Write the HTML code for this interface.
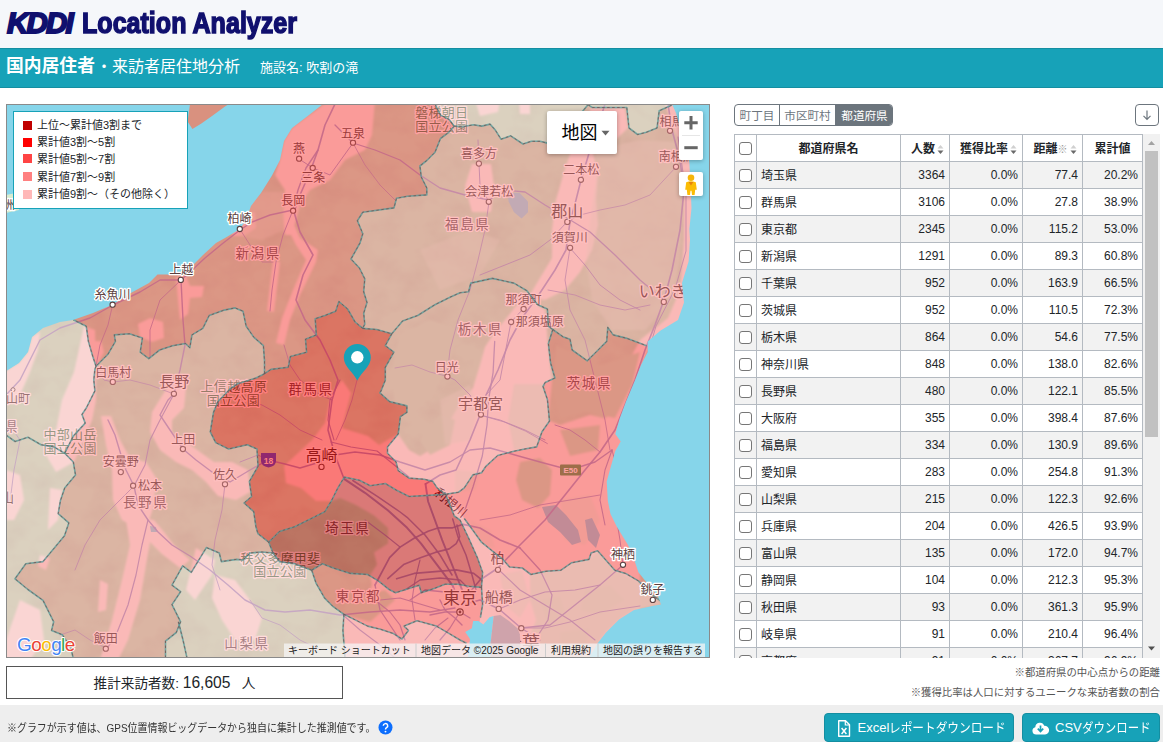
<!DOCTYPE html>
<html lang="ja">
<head>
<meta charset="utf-8">
<title>KDDI Location Analyzer</title>
<style>
*{box-sizing:border-box;margin:0;padding:0}
html,body{width:1163px;height:742px;overflow:hidden;background:#fff}
body{font-family:"Liberation Sans","Noto Sans CJK JP",sans-serif;color:#212529;position:relative;font-size:12px}
.abs{position:absolute}
#hdr{left:0;top:0;width:1163px;height:48px;background:#f5f7fa}
#logo{left:7px;top:0;height:47px;white-space:nowrap;color:#10106e}
#logo .k{position:absolute;left:0;top:6px;font-style:italic;font-weight:bold;font-size:29.5px;line-height:34px;letter-spacing:-1.8px;-webkit-text-stroke:1.9px #10106e;display:block;transform-origin:left center}
#logo .l{position:absolute;left:75px;top:6px;font-weight:bold;font-size:29.5px;line-height:34px;-webkit-text-stroke:1.5px #10106e;display:block;transform:scaleX(0.85);transform-origin:left center}
#bar{left:0;top:48px;width:1163px;height:40px;background:#17a2b8;border-top:1px solid #148ea1;border-bottom:1px solid #148ea1;color:#fff}
#bar .t1{left:6px;top:2px;font-size:17.8px;font-weight:bold;white-space:nowrap}
#bar .t2{left:96px;top:4px;font-size:16px;white-space:nowrap}
#bar .t3{left:260px;top:8px;font-size:13px;white-space:nowrap}
#map{left:6px;top:104px;width:704px;height:554px;border:1px solid #8a8a8a;overflow:hidden;background:#86d5ea}
#legend{left:13px;top:111px;width:175px;height:98px;background:#fff;border:1px solid #17a2b8;font-size:11px}
#legend div{position:absolute;left:23px;white-space:nowrap;line-height:14px}
#legend i{position:absolute;left:9px;width:9px;height:9px}
#total{left:6px;top:666px;width:337px;height:33px;border:1px solid #555;background:#fff;text-align:center;font-size:13.600px;line-height:31px;white-space:nowrap}
#foot{left:0;top:705px;width:1163px;height:37px;background:#eeeeee}
#foot .n{left:7px;top:14px;font-size:11px;color:#333;white-space:nowrap;transform-origin:left center}
.btn{position:absolute;top:713px;height:29px;background:#17a2b8;border:1px solid #148ea1;border-radius:4px;color:#fff;font-size:13px;line-height:28px;white-space:nowrap}
.bt{position:absolute;top:0;white-space:nowrap}
.kn{display:inline-block;transform-origin:left center;white-space:nowrap}
.note{position:absolute;right:3px;font-size:10.4px;color:#555;white-space:nowrap}
#tabs{left:734px;top:104px;width:159px;height:22px;border:1px solid #6c757d;border-radius:4px;overflow:hidden;font-size:12px;color:#6c757d}
#tabs span{position:absolute;top:0;height:20px;line-height:22px;text-align:center;font-size:11.6px}
#dl{left:1135px;top:104px;width:24px;height:22px;border:1px solid #6c757d;border-radius:4px;color:#6c757d;text-align:center;line-height:18px;font-size:13px}
#tblwrap{left:734px;top:134px;width:426px;height:524px;overflow:hidden}
table{border-collapse:collapse;table-layout:fixed;width:409px;font-size:12px}
td,th{border:1px solid #b4bac1;height:27px;padding:0 4px 2px 4px;white-space:nowrap;overflow:hidden}
th{font-weight:bold;text-align:center}
td.r{text-align:right;padding-bottom:0}
tr.o td{background:#f2f2f2}
.cb{display:block;width:13px;height:13px;border:1px solid #767676;border-radius:3px;background:#fff;margin:0 auto}
#sb{left:1143px;top:134px;width:17px;height:524px;background:#f1f1f1}
#sb b{position:absolute;left:2px;top:17px;width:13px;height:286px;background:#c1c1c1}
.so{display:inline-block;width:7px;height:11px;margin-left:2px;vertical-align:-2px}
</style>
</head>
<body>
<div id="hdr" class="abs"></div>
<div id="logo" class="abs"><span class="k">KDDI</span> <span class="l">Location Analyzer</span></div>
<div id="bar" class="abs">
 <div class="abs t1">国内居住者</div>
 <div class="abs t2">・<span style="position:absolute;left:16px;top:0">来訪者居住地分析</span></div>
 <div class="abs t3">施設名: 吹割の滝</div>
</div>

<div id="map" class="abs">
<svg width="702" height="552" viewBox="7 105 702 552" style="position:absolute;left:0;top:0;display:block" font-family="'Liberation Sans','Noto Sans CJK JP',sans-serif">
<defs><filter id="b1" x="-5%" y="-5%" width="110%" height="110%"><feGaussianBlur stdDeviation="1.2"/></filter><filter id="hs" x="0" y="0" width="100%" height="100%"><feTurbulence type="fractalNoise" baseFrequency="0.035 0.045" numOctaves="3" seed="7"/><feColorMatrix type="matrix" values="0 0 0 0 0.35  0 0 0 0 0.5  0 0 0 0 0.38  1.6 0 0 0 -0.62"/></filter></defs>
<rect x="0" y="100" width="720" height="560" fill="#b8ecc8"/>
<rect x="0" y="100" width="720" height="560" filter="url(#hs)" opacity="0.42"/>
<g filter="url(#b1)">
<polygon points="312.0,440.0 325.0,423.0 331.0,395.0 342.0,380.0 351.0,393.0 342.0,428.0 368.0,436.0 379.0,445.0 398.0,434.0 409.0,450.0 420.0,456.0 442.0,443.0 451.0,419.0 462.0,400.0 473.0,388.0 480.0,365.0 485.0,347.0 495.0,332.0 505.0,320.0 516.0,306.0 526.0,298.0 545.0,310.0 548.0,345.0 552.0,380.0 548.0,420.0 560.0,425.0 590.0,415.0 612.0,420.0 640.0,400.0 640.0,660.0 345.0,660.0 343.0,615.0 365.0,600.0 372.0,585.0 370.0,575.0 377.0,564.6 374.0,552.4 388.0,543.6 388.0,528.0 374.0,515.6 356.0,505.0 340.0,498.0 331.0,501.0 316.0,501.0 301.0,488.0 286.0,483.0 284.0,466.0" fill="#f6f4f0"/>
<polygon points="330.0,100.0 292.0,128.0 284.0,141.0 280.0,160.0 275.0,175.0 285.0,190.0 283.0,215.0 285.0,235.0 292.0,235.0 300.0,205.0 310.0,190.0 330.0,180.0 345.0,160.0 365.0,150.0 372.0,135.0 375.0,100.0" fill="#f6f4f0"/>
<polygon points="240.0,215.0 255.0,212.0 256.0,228.0 244.0,236.0 232.0,236.0" fill="#f6f4f0"/>
<polygon points="290.0,215.0 300.0,238.0 318.0,250.0 316.0,262.0 300.0,295.0 290.0,320.0 284.0,345.0 276.0,343.0 282.0,318.0 293.0,290.0 306.0,260.0 296.0,245.0 286.0,225.0" fill="#f6f4f0"/>
<polygon points="273.0,260.0 280.0,262.0 274.0,312.0 267.0,311.0" fill="#f6f4f0"/>
<polygon points="176.0,277.0 186.0,276.0 190.0,286.0 204.0,286.0 202.0,297.0 190.0,298.0 188.0,314.0 180.0,320.0 178.0,300.0" fill="#f6f4f0"/>
<polygon points="138.0,324.0 150.0,318.0 163.0,322.0 164.0,338.0 152.0,342.0 140.0,337.0" fill="#f6f4f0"/>
<polygon points="89.0,341.0 101.0,341.0 104.0,352.0 97.0,366.0 91.0,358.0" fill="#f6f4f0"/>
<polygon points="6.0,371.0 19.0,363.0 28.0,352.0 32.0,337.0 40.0,332.0 38.0,350.0 30.0,372.0 20.0,395.0 6.0,402.0" fill="#f6f4f0"/>
<polygon points="84.0,326.0 95.0,330.0 96.0,366.0 96.0,400.0 92.0,420.0 84.0,440.0 74.0,462.0 56.0,472.0 46.0,455.0 56.0,430.0 62.0,400.0 74.0,372.0" fill="#f6f4f0"/>
<polygon points="50.0,488.0 62.0,490.0 58.0,520.0 48.0,530.0" fill="#f6f4f0"/>
<polygon points="101.0,416.0 111.0,416.0 120.0,440.0 130.0,458.0 146.0,462.0 156.0,478.0 154.0,505.0 148.0,524.0 136.0,528.0 122.0,520.0 113.0,500.0 112.0,470.0 106.0,445.0" fill="#f6f4f0"/>
<polygon points="170.0,383.0 186.0,388.0 184.0,408.0 172.0,420.0 172.0,432.0 186.0,442.0 200.0,452.0 214.0,462.0 232.0,462.0 248.0,470.0 250.0,492.0 236.0,500.0 218.0,496.0 206.0,482.0 192.0,470.0 176.0,462.0 160.0,450.0 150.0,432.0 152.0,412.0 162.0,396.0" fill="#f6f4f0"/>
<polygon points="134.0,512.0 144.0,518.0 154.0,520.0 164.0,532.0 174.0,545.0 190.0,560.0 180.0,568.0 162.0,554.0 150.0,542.0 146.0,565.0 140.0,600.0 128.0,640.0 118.0,660.0 100.0,660.0 112.0,620.0 122.0,580.0 130.0,545.0 126.0,520.0" fill="#f6f4f0"/>
<polygon points="100.0,580.0 108.0,584.0 106.0,610.0 98.0,612.0" fill="#f6f4f0"/>
<polygon points="40.0,555.0 50.0,558.0 46.0,570.0 38.0,566.0" fill="#f6f4f0"/>
<polygon points="6.0,470.0 20.0,475.0 24.0,500.0 14.0,520.0 6.0,520.0" fill="#f6f4f0"/>
<polygon points="20.0,600.0 40.0,610.0 44.0,640.0 30.0,660.0 6.0,660.0 6.0,640.0" fill="#f6f4f0"/>
<polygon points="215.0,575.0 235.0,580.0 250.0,600.0 262.0,618.0 255.0,640.0 235.0,640.0 222.0,620.0 212.0,598.0" fill="#f6f4f0"/>
<polygon points="196.0,548.0 215.0,560.0 212.0,575.0 195.0,600.0 186.0,590.0" fill="#f6f4f0"/>
<polygon points="472.0,164.0 491.0,164.0 494.0,186.0 491.0,212.0 472.0,212.0 465.0,186.0" fill="#f6f4f0"/>
<polygon points="572.0,148.0 592.0,148.0 598.0,175.0 596.0,200.0 598.0,225.0 592.0,250.0 580.0,272.0 565.0,290.0 545.0,300.0 528.0,298.0 540.0,278.0 552.0,258.0 552.0,230.0 556.0,200.0 564.0,172.0" fill="#f6f4f0"/>
<polygon points="590.0,108.0 625.0,108.0 628.0,128.0 610.0,145.0 592.0,140.0" fill="#f6f4f0"/>
<polygon points="519.0,100.0 530.0,100.0 530.0,114.0 520.0,114.0" fill="#f6f4f0"/>
<polygon points="665.0,104.0 680.0,104.0 695.0,160.0 695.0,300.0 680.0,330.0 650.0,345.0 640.0,340.0 668.0,318.0 680.0,290.0 684.0,240.0 684.0,180.0 676.0,135.0" fill="#f6f4f0"/>
<polygon points="640.0,340.0 650.0,345.0 636.0,380.0 620.0,420.0 605.0,420.0 622.0,385.0 632.0,355.0" fill="#f6f4f0"/>
<polygon points="475.0,100.0 500.0,100.0 498.0,112.0 480.0,116.0" fill="#f6f4f0"/>
<polygon points="520.0,462.0 540.0,458.0 552.0,470.0 550.0,495.0 538.0,508.0 522.0,500.0 516.0,480.0" fill="#b8ecc8"/>
<polygon points="556.0,345.0 600.0,365.0 640.0,352.0 632.0,385.0 615.0,418.0 585.0,412.0 560.0,420.0 552.0,390.0" fill="#b8ecc8"/>
<polygon points="420.0,440.0 440.0,415.0 455.0,420.0 450.0,445.0 430.0,455.0" fill="#b8ecc8"/>
<polygon points="395.0,405.0 430.0,400.0 450.0,360.0 458.0,330.0 430.0,320.0 400.0,335.0 392.0,370.0" fill="#b8ecc8"/>
<polygon points="585.0,590.0 610.0,585.0 625.0,600.0 600.0,615.0 580.0,610.0" fill="#b8ecc8"/>
<polygon points="540.0,600.0 560.0,596.0 566.0,615.0 548.0,625.0" fill="#b8ecc8"/>
<polygon points="560.0,632.0 590.0,628.0 585.0,650.0 560.0,655.0" fill="#b8ecc8"/>
<polygon points="345.0,600.0 385.0,590.0 395.0,600.0 370.0,622.0 345.0,615.0" fill="#b8ecc8"/>
<polygon points="560.0,430.0 600.0,425.0 598.0,450.0 570.0,456.0" fill="#b8ecc8"/>
<polygon points="530.0,574.0 546.0,571.0 561.0,570.0 572.0,563.0 589.0,559.0 598.0,551.0 615.0,570.0 638.0,581.0 653.0,596.0 661.0,604.0 634.0,610.0 619.0,620.0 606.0,632.0 598.0,643.0 589.0,660.0 535.0,660.0 528.0,640.0 536.0,620.0 530.0,600.0" fill="#d3f8e2" fill-opacity="0.90"/>
<polygon points="500.0,575.0 522.0,570.0 530.0,600.0 520.0,618.0 505.0,605.0" fill="#d3f8e2" fill-opacity="0.60"/>
<polygon points="514.0,384.0 545.0,384.0 549.0,421.0 542.0,432.0 536.0,447.0 514.0,450.0 508.0,420.0" fill="#d3f8e2" fill-opacity="0.80"/>
<polygon points="595.0,150.0 640.0,140.0 675.0,142.0 682.0,200.0 680.0,260.0 672.0,300.0 645.0,330.0 612.0,330.0 592.0,300.0 586.0,260.0 590.0,220.0 596.0,180.0" fill="#d3f8e2" fill-opacity="0.45"/>
<polygon points="455.0,470.0 480.0,472.0 475.0,490.0 455.0,492.0" fill="#d3f8e2" fill-opacity="0.50"/>
<polygon points="560.0,500.0 590.0,495.0 600.0,520.0 585.0,545.0 565.0,540.0" fill="#d3f8e2" fill-opacity="0.50"/>
<polygon points="470.0,520.0 490.0,530.0 495.0,548.0 480.0,545.0" fill="#d3f8e2" fill-opacity="0.40"/>
<polygon points="246.0,206.0 262.0,192.0 285.0,192.0 284.0,230.0 262.0,240.0 240.0,236.0" fill="#d3f8e2" fill-opacity="0.50"/>
<polygon points="440.0,400.0 470.0,385.0 478.0,410.0 470.0,440.0 445.0,445.0" fill="#d3f8e2" fill-opacity="0.50"/>
<polygon points="420.0,250.0 470.0,230.0 500.0,240.0 480.0,275.0 440.0,290.0" fill="#d3f8e2" fill-opacity="0.35"/>
</g>
<polygon points="507.6,192.8 519.4,192.8 528.0,201.4 528.0,212.2 521.6,218.6 514.0,212.2 508.6,201.4" fill="#86d5ea"/>
<polygon points="542.0,507.0 556.0,505.0 566.0,515.0 578.0,530.0 581.0,542.0 572.0,545.0 560.0,532.0 548.0,522.0" fill="#86d5ea"/>
<polygon points="585.0,520.0 592.0,518.0 600.0,535.0 596.0,548.0 588.0,540.0" fill="#86d5ea"/>
<polygon points="150.0,526.0 156.0,527.0 157.0,532.0 151.0,532.0" fill="#86d5ea"/>
<g fill="none" stroke="#8c90cf" stroke-opacity="0.9" stroke-linejoin="round" stroke-linecap="round">
<polyline points="344.0,478.8 335.0,455.0 328.0,430.0 332.0,400.0 338.0,380.0 330.0,360.0 320.0,340.0 305.0,320.0 296.0,300.0 303.0,275.0 313.0,255.0 300.0,232.0 294.0,212.0 300.0,195.0 310.0,172.0 318.0,150.0 325.0,125.0 335.0,104.0" stroke-width="1.6"/>
<polyline points="425.5,484.0 440.0,475.0 456.0,470.0 470.0,440.0 480.0,415.0 486.0,395.0 498.0,370.0 510.0,340.0 522.0,318.0 538.0,296.0 555.0,270.0 566.0,250.0 570.0,222.0 576.0,200.0 581.0,180.0 590.0,150.0 600.0,120.0 605.0,104.0" stroke-width="1.6"/>
<polyline points="465.0,598.0 480.0,580.0 498.0,568.0 520.0,545.0 545.0,520.0 565.0,495.0 585.0,470.0 600.0,452.0 615.0,430.0 625.0,405.0 635.0,380.0 645.0,350.0 655.0,325.0 664.0,300.0 672.0,270.0 680.0,230.0 684.0,190.0 680.0,160.0 672.0,130.0 668.0,104.0" stroke-width="1.6"/>
<polyline points="335.0,455.0 320.0,462.0 300.0,468.0 285.0,464.0 268.0,460.0 250.0,470.0 230.0,482.0 212.0,472.0 196.0,460.0 183.0,449.0 170.0,430.0 160.0,415.0 168.0,400.0 174.0,394.0 180.0,370.0 185.0,345.0 183.0,320.0 182.0,300.0 181.0,280.0" stroke-width="1.4"/>
<polyline points="318.0,150.0 306.0,168.0 298.0,190.0 293.0,210.0 270.0,215.0 252.0,222.0 240.0,230.0 222.0,244.0 205.0,258.0 190.0,272.0 181.0,280.0 160.0,280.0 140.0,292.0 113.0,305.0 90.0,318.0 60.0,328.0 40.0,340.0 30.0,360.0 20.0,380.0 6.0,395.0" stroke-width="1.4"/>
<polyline points="335.0,125.0 353.0,143.0 375.0,150.0 400.0,160.0 420.0,175.0 440.0,188.0 465.0,195.0 489.0,200.0 505.0,190.0 525.0,192.0 545.0,205.0 567.0,218.0 590.0,232.0 615.0,255.0 640.0,280.0 664.0,300.0" stroke-width="1.3"/>
<polyline points="335.0,455.0 355.0,452.0 380.0,455.0 400.0,462.0 425.0,470.0 450.0,462.0 470.0,450.0 490.0,448.0 515.0,455.0 540.0,462.0 570.0,470.0 595.0,462.0 612.0,450.0" stroke-width="1.4"/>
<polyline points="400.0,640.0 380.0,610.0 375.0,585.0" stroke-width="1.3"/>
<polyline points="520.0,548.0 540.0,570.0 552.0,595.0 548.0,620.0 535.0,640.0" stroke-width="1.3"/>
<polyline points="455.0,608.0 430.0,612.0 400.0,610.0 370.0,612.0 340.0,615.0 310.0,610.0 285.0,612.0 265.0,610.0 245.0,600.0 228.0,585.0 210.0,570.0 190.0,556.0 172.0,545.0 158.0,532.0 148.0,520.0 138.0,505.0 134.0,486.0 126.0,470.0 121.0,455.0 115.0,435.0 108.0,420.0" stroke-width="1.4"/>
<polyline points="148.0,520.0 142.0,545.0 136.0,575.0 128.0,605.0 116.0,635.0 106.0,650.0" stroke-width="1.2"/>
<polyline points="134.0,486.0 145.0,465.0 150.0,440.0 160.0,420.0 174.0,394.0" stroke-width="1.1"/>
<polyline points="462.0,605.0 480.0,600.0 499.0,609.0 521.0,628.0 540.0,640.0" stroke-width="1.4"/>
<polyline points="499.0,609.0 520.0,600.0 545.0,592.0 575.0,590.0 600.0,585.0" stroke-width="1.1"/>
<polyline points="499.0,570.0 520.0,590.0 545.0,605.0 570.0,620.0 595.0,640.0" stroke-width="1.1"/>
<polyline points="268.0,460.0 258.0,455.0 240.0,462.0" stroke-width="1.0"/>
<polyline points="480.0,415.0 470.0,395.0 455.0,380.0 447.0,376.0" stroke-width="1.0"/>
<polyline points="480.0,415.0 500.0,420.0 525.0,430.0 545.0,440.0" stroke-width="1.0"/>
<polyline points="486.0,395.0 500.0,380.0 511.0,322.0 523.0,309.0" stroke-width="1.0"/>
<polyline points="489.0,202.0 480.0,185.0 479.0,164.0 478.0,140.0" stroke-width="1.0"/>
<polyline points="567.0,222.0 550.0,240.0 530.0,255.0 505.0,265.0 480.0,275.0" stroke-width="1.0"/>
<polyline points="570.0,248.0 585.0,265.0 600.0,285.0 620.0,300.0 640.0,310.0" stroke-width="1.0"/>
<polyline points="299.0,159.0 313.0,168.0 330.0,175.0 353.0,143.0" stroke-width="1.0"/>
<polyline points="293.0,210.0 283.0,235.0 276.0,262.0 272.0,290.0 270.0,311.0" stroke-width="1.0"/>
<polyline points="181.0,280.0 160.0,300.0 150.0,330.0 150.0,358.0" stroke-width="0.9"/>
<polyline points="612.0,450.0 605.0,470.0 600.0,500.0 605.0,525.0" stroke-width="1.1"/>
<polyline points="600.0,452.0 585.0,440.0 570.0,430.0 555.0,425.0" stroke-width="1.0"/>
<polyline points="344.0,478.8 365.0,492.8 387.8,510.3 407.1,527.8 421.1,543.6 431.6,557.6 442.2,571.6 452.7,585.7 458.0,600.0" stroke-width="2.0"/>
<polyline points="352.8,480.5 377.3,496.3 400.1,512.0 407.1,517.3 425.0,535.0 440.0,555.0 452.0,575.0" stroke-width="1.5"/>
<polyline points="425.5,484.0 428.1,501.5 435.2,520.8 442.2,540.1 449.2,557.6 456.2,575.2 463.2,592.7" stroke-width="1.9"/>
<polyline points="375.0,585.0 389.6,557.6 400.1,547.1 414.1,538.3 428.1,531.3 438.7,527.8 452.7,527.8 463.2,524.3 480.0,528.0 500.0,540.0 520.0,548.0" stroke-width="1.7"/>
<polyline points="387.8,578.7 403.6,564.6 421.1,557.6 435.2,552.4 449.2,548.9 456.2,543.6 459.7,536.6 457.0,525.0" stroke-width="1.6"/>
<polyline points="396.6,578.7 414.1,573.4 435.2,571.6 456.2,569.9 473.7,573.4 482.0,580.0" stroke-width="1.6"/>
<polyline points="452.7,519.0 457.9,536.6 466.0,555.0 472.0,575.0 476.0,590.0" stroke-width="1.5"/>
<polyline points="405.0,590.0 420.0,580.0 440.0,578.0 460.0,580.0 470.0,590.0" stroke-width="1.3"/>
<polyline points="410.0,600.0 425.0,590.0 445.0,592.0 458.0,600.0" stroke-width="1.3"/>
<polyline points="440.0,600.0 445.0,610.0 455.0,618.0 462.0,625.0" stroke-width="1.4"/>
<polyline points="430.0,615.0 445.0,612.0 460.0,612.0 470.0,618.0" stroke-width="1.3"/>
<polyline points="380.0,600.0 400.0,598.0 420.0,604.0 440.0,610.0" stroke-width="1.2"/>
<polyline points="360.0,590.0 375.0,600.0 390.0,612.0 400.0,625.0 405.0,640.0" stroke-width="1.2"/>
<polyline points="420.0,560.0 415.0,580.0 412.0,600.0 415.0,620.0" stroke-width="1.1"/>
<polyline points="365.0,520.0 385.0,535.0 400.0,547.0" stroke-width="1.1"/>
<polyline points="440.0,640.0 450.0,628.0 458.0,615.0" stroke-width="1.2"/>
<polyline points="425.0,640.0 435.0,628.0 448.0,618.0" stroke-width="1.1"/>
<polyline points="489.0,202.0 485.0,230.0 478.0,260.0 470.0,290.0 458.0,320.0 450.0,350.0 447.0,376.0" stroke-width="0.9"/>
<polyline points="548.0,290.0 575.0,295.0 600.0,305.0 625.0,310.0 650.0,305.0" stroke-width="0.9"/>
<polyline points="570.0,248.0 565.0,280.0 570.0,310.0 585.0,340.0 595.0,380.0 605.0,420.0 610.0,450.0" stroke-width="0.9"/>
<polyline points="612.0,450.0 620.0,480.0 615.0,510.0 620.0,540.0 623.0,565.0" stroke-width="1.0"/>
<polyline points="480.0,520.0 510.0,515.0 540.0,505.0 570.0,500.0 600.0,495.0" stroke-width="0.9"/>
<polyline points="521.0,628.0 550.0,625.0 575.0,605.0 600.0,585.0 623.0,565.0" stroke-width="1.3"/>
<polyline points="521.0,628.0 545.0,628.0 570.0,622.0 600.0,612.0 640.0,606.0" stroke-width="0.9"/>
<polyline points="134.0,486.0 120.0,500.0 100.0,520.0 85.0,545.0 75.0,570.0" stroke-width="0.9"/>
<polyline points="225.0,484.0 222.0,510.0 215.0,540.0 212.0,565.0 220.0,590.0" stroke-width="0.9"/>
<polyline points="6.0,420.0 20.0,440.0 14.0,470.0 10.0,502.0" stroke-width="0.9"/>
<polyline points="284.0,345.0 290.0,365.0 300.0,380.0 320.0,395.0 332.0,400.0" stroke-width="0.9"/>
<polyline points="322.0,440.0 300.0,430.0 280.0,415.0 262.0,405.0 245.0,400.0" stroke-width="0.9"/>
<polyline points="331.0,442.0 351.0,447.0 377.0,451.0 398.0,468.0 409.0,477.0" stroke-width="1.1"/>
<polyline points="340.0,380.0 330.0,400.0 328.0,420.0 334.0,440.0" stroke-width="1.1"/>
<polyline points="494.7,341.3 493.1,372.3 488.5,400.2 487.0,425.0 482.3,456.0 473.0,487.0 465.0,510.0" stroke-width="1.3"/>
<polyline points="482.3,415.7 504.0,421.9 525.7,431.2 547.4,443.6" stroke-width="0.9"/>
<polyline points="678.0,137.0 686.0,194.0 686.0,251.0 675.0,289.0 656.0,326.0 645.0,364.0" stroke-width="1.0"/>
<polyline points="353.0,143.0 365.0,165.0 380.0,185.0 395.0,200.0" stroke-width="0.8"/>
<polyline points="239.8,229.0 250.0,245.0 262.0,262.0 273.0,262.0" stroke-width="0.8"/>
<polyline points="112.6,305.0 108.0,325.0 100.0,345.0 96.0,366.0 104.0,380.0 112.8,382.0" stroke-width="0.9"/>
<polyline points="173.9,394.0 150.0,385.0 130.0,380.0 112.8,382.0" stroke-width="0.8"/>
<polyline points="567.0,222.0 580.0,215.0 600.0,210.0 625.0,205.0 650.0,195.0 676.0,167.0" stroke-width="0.8"/>
<polyline points="446.0,376.0 430.0,372.0 412.0,365.0 395.0,368.0" stroke-width="0.8"/>
<polyline points="357.0,380.0 352.0,400.0 345.0,420.0 336.0,440.0" stroke-width="0.8"/>
<polyline points="105.8,648.0 90.0,640.0 75.0,630.0 60.0,635.0" stroke-width="0.8"/>
<polyline points="250.0,600.0 262.0,618.0 280.0,625.0 300.0,640.0 320.0,650.0" stroke-width="0.9"/>
<polyline points="343.0,615.0 360.0,630.0 380.0,645.0 395.0,658.0" stroke-width="1.1"/>
</g>
<circle cx="299.1" cy="158.7" r="2.6" fill="#fff" stroke="#4a4a4a" stroke-width="1.1"/>
<text x="299.1" y="152.8" font-size="12" fill="#303030" text-anchor="middle" letter-spacing="0" font-weight="normal" stroke="#fff" stroke-width="2.6" stroke-linejoin="round" paint-order="stroke" >燕</text>
<circle cx="312.7" cy="168.0" r="2.6" fill="#fff" stroke="#4a4a4a" stroke-width="1.1"/>
<text x="313.2" y="182.0" font-size="12" fill="#303030" text-anchor="middle" letter-spacing="0" font-weight="normal" stroke="#fff" stroke-width="2.6" stroke-linejoin="round" paint-order="stroke" >三条</text>
<circle cx="353.0" cy="142.7" r="2.6" fill="#fff" stroke="#4a4a4a" stroke-width="1.1"/>
<text x="353.0" y="137.7" font-size="12" fill="#303030" text-anchor="middle" letter-spacing="0" font-weight="normal" stroke="#fff" stroke-width="2.6" stroke-linejoin="round" paint-order="stroke" >五泉</text>
<circle cx="293.1" cy="210.7" r="2.6" fill="#fff" stroke="#4a4a4a" stroke-width="1.1"/>
<text x="293.3" y="205.3" font-size="12" fill="#303030" text-anchor="middle" letter-spacing="0" font-weight="normal" stroke="#fff" stroke-width="2.6" stroke-linejoin="round" paint-order="stroke" >長岡</text>
<circle cx="112.8" cy="381.9" r="2.6" fill="#fff" stroke="#4a4a4a" stroke-width="1.1"/>
<text x="113.2" y="377.4" font-size="12" fill="#303030" text-anchor="middle" letter-spacing="0" font-weight="normal" stroke="#fff" stroke-width="2.6" stroke-linejoin="round" paint-order="stroke" >白馬村</text>
<circle cx="173.9" cy="393.8" r="2.6" fill="#fff" stroke="#4a4a4a" stroke-width="1.1"/>
<text x="174.3" y="386.7" font-size="15" fill="#303030" text-anchor="middle" letter-spacing="0" font-weight="normal" stroke="#fff" stroke-width="2.6" stroke-linejoin="round" paint-order="stroke" >長野</text>
<circle cx="120.8" cy="472.1" r="2.6" fill="#fff" stroke="#4a4a4a" stroke-width="1.1"/>
<text x="120.8" y="466.3" font-size="12" fill="#303030" text-anchor="middle" letter-spacing="0" font-weight="normal" stroke="#fff" stroke-width="2.6" stroke-linejoin="round" paint-order="stroke" >安曇野</text>
<circle cx="133.1" cy="485.7" r="2.6" fill="#fff" stroke="#4a4a4a" stroke-width="1.1"/>
<text x="138.0" y="490.4" font-size="12" fill="#303030" text-anchor="start" letter-spacing="0" font-weight="normal" stroke="#fff" stroke-width="2.6" stroke-linejoin="round" paint-order="stroke" >松本</text>
<circle cx="182.9" cy="449.0" r="2.6" fill="#fff" stroke="#4a4a4a" stroke-width="1.1"/>
<text x="183.3" y="443.6" font-size="12" fill="#303030" text-anchor="middle" letter-spacing="0" font-weight="normal" stroke="#fff" stroke-width="2.6" stroke-linejoin="round" paint-order="stroke" >上田</text>
<circle cx="225.0" cy="484.2" r="2.6" fill="#fff" stroke="#4a4a4a" stroke-width="1.1"/>
<text x="225.0" y="478.6" font-size="12" fill="#303030" text-anchor="middle" letter-spacing="0" font-weight="normal" stroke="#fff" stroke-width="2.6" stroke-linejoin="round" paint-order="stroke" >佐久</text>
<circle cx="105.8" cy="648.7" r="2.6" fill="#fff" stroke="#4a4a4a" stroke-width="1.1"/>
<text x="105.8" y="643.3" font-size="12" fill="#303030" text-anchor="middle" letter-spacing="0" font-weight="normal" stroke="#fff" stroke-width="2.6" stroke-linejoin="round" paint-order="stroke" >飯田</text>
<circle cx="321.5" cy="466.9" r="2.6" fill="#fff" stroke="#4a4a4a" stroke-width="1.1"/>
<text x="321.5" y="461.3" font-size="16" fill="#303030" text-anchor="middle" letter-spacing="0" font-weight="normal" stroke="#fff" stroke-width="2.6" stroke-linejoin="round" paint-order="stroke" >高崎</text>
<circle cx="480.9" cy="414.5" r="2.6" fill="#fff" stroke="#4a4a4a" stroke-width="1.1"/>
<text x="480.5" y="408.7" font-size="15" fill="#303030" text-anchor="middle" letter-spacing="0" font-weight="normal" stroke="#fff" stroke-width="2.6" stroke-linejoin="round" paint-order="stroke" >宇都宮</text>
<circle cx="523.6" cy="309.0" r="2.6" fill="#fff" stroke="#4a4a4a" stroke-width="1.1"/>
<text x="523.6" y="304.3" font-size="12" fill="#303030" text-anchor="middle" letter-spacing="0" font-weight="normal" stroke="#fff" stroke-width="2.6" stroke-linejoin="round" paint-order="stroke" >那須町</text>
<circle cx="511.1" cy="322.0" r="2.6" fill="#fff" stroke="#4a4a4a" stroke-width="1.1"/>
<text x="515.7" y="326.3" font-size="12" fill="#303030" text-anchor="start" letter-spacing="0" font-weight="normal" stroke="#fff" stroke-width="2.6" stroke-linejoin="round" paint-order="stroke" >那須塩原</text>
<circle cx="663.8" cy="301.9" r="2.6" fill="#fff" stroke="#4a4a4a" stroke-width="1.1"/>
<text x="662.8" y="296.9" font-size="16" fill="#303030" text-anchor="middle" letter-spacing="0" font-weight="normal" stroke="#fff" stroke-width="2.6" stroke-linejoin="round" paint-order="stroke" >いわき</text>
<circle cx="447.4" cy="376.5" r="2.6" fill="#fff" stroke="#4a4a4a" stroke-width="1.1"/>
<text x="446.8" y="371.6" font-size="12" fill="#303030" text-anchor="middle" letter-spacing="0" font-weight="normal" stroke="#fff" stroke-width="2.6" stroke-linejoin="round" paint-order="stroke" >日光</text>
<circle cx="570.1" cy="247.8" r="2.6" fill="#fff" stroke="#4a4a4a" stroke-width="1.1"/>
<text x="569.7" y="241.9" font-size="12" fill="#303030" text-anchor="middle" letter-spacing="0" font-weight="normal" stroke="#fff" stroke-width="2.6" stroke-linejoin="round" paint-order="stroke" >須賀川</text>
<circle cx="567.3" cy="221.9" r="2.6" fill="#fff" stroke="#4a4a4a" stroke-width="1.1"/>
<text x="567.3" y="216.9" font-size="16" fill="#303030" text-anchor="middle" letter-spacing="0" font-weight="normal" stroke="#fff" stroke-width="2.6" stroke-linejoin="round" paint-order="stroke" >郡山</text>
<circle cx="580.9" cy="179.8" r="2.6" fill="#fff" stroke="#4a4a4a" stroke-width="1.1"/>
<text x="581.3" y="174.4" font-size="12" fill="#303030" text-anchor="middle" letter-spacing="0" font-weight="normal" stroke="#fff" stroke-width="2.6" stroke-linejoin="round" paint-order="stroke" >二本松</text>
<circle cx="478.9" cy="163.6" r="2.6" fill="#fff" stroke="#4a4a4a" stroke-width="1.1"/>
<text x="478.9" y="158.2" font-size="12" fill="#303030" text-anchor="middle" letter-spacing="0" font-weight="normal" stroke="#fff" stroke-width="2.6" stroke-linejoin="round" paint-order="stroke" >喜多方</text>
<circle cx="488.8" cy="201.8" r="2.6" fill="#fff" stroke="#4a4a4a" stroke-width="1.1"/>
<text x="489.2" y="196.4" font-size="12" fill="#303030" text-anchor="middle" letter-spacing="0" font-weight="normal" stroke="#fff" stroke-width="2.6" stroke-linejoin="round" paint-order="stroke" >会津若松</text>
<circle cx="670.0" cy="130.8" r="2.6" fill="#fff" stroke="#4a4a4a" stroke-width="1.1"/>
<text x="671.5" y="125.9" font-size="12" fill="#303030" text-anchor="middle" letter-spacing="0" font-weight="normal" stroke="#fff" stroke-width="2.6" stroke-linejoin="round" paint-order="stroke" >相馬</text>
<circle cx="676.0" cy="166.8" r="2.6" fill="#fff" stroke="#4a4a4a" stroke-width="1.1"/>
<text x="676.8" y="161.4" font-size="12" fill="#303030" text-anchor="middle" letter-spacing="0" font-weight="normal" stroke="#fff" stroke-width="2.6" stroke-linejoin="round" paint-order="stroke" >南相馬</text>
<circle cx="498.0" cy="569.8" r="2.6" fill="#fff" stroke="#4a4a4a" stroke-width="1.1"/>
<text x="497.6" y="563.4" font-size="14" fill="#303030" text-anchor="middle" letter-spacing="0" font-weight="normal" stroke="#fff" stroke-width="2.6" stroke-linejoin="round" paint-order="stroke" >柏</text>
<circle cx="498.7" cy="608.9" r="2.6" fill="#fff" stroke="#4a4a4a" stroke-width="1.1"/>
<text x="498.7" y="602.0" font-size="14" fill="#303030" text-anchor="middle" letter-spacing="0" font-weight="normal" stroke="#fff" stroke-width="2.6" stroke-linejoin="round" paint-order="stroke" >船橋</text>
<circle cx="521.3" cy="628.2" r="2.6" fill="#fff" stroke="#4a4a4a" stroke-width="1.1"/>
<text x="522.0" y="648.5" font-size="18" fill="#303030" text-anchor="middle" letter-spacing="0" font-weight="normal" stroke="#fff" stroke-width="2.6" stroke-linejoin="round" paint-order="stroke" >千葉</text>
<circle cx="13" cy="389.7" r="2" fill="#fff" stroke="#4a4a4a"/>
<text x="30.0" y="402.6" font-size="12" fill="#303030" text-anchor="end" letter-spacing="0" font-weight="normal" stroke="#fff" stroke-width="2.6" stroke-linejoin="round" paint-order="stroke" >立山町</text>
<text x="19.0" y="431.0" font-size="13" fill="#4c4a50" text-anchor="end" letter-spacing="1.5" font-weight="normal" stroke="#fff" stroke-width="2.6" stroke-linejoin="round" paint-order="stroke" >富山県</text>
<text x="14.0" y="502.0" font-size="13" fill="#303030" text-anchor="end" letter-spacing="0" font-weight="normal" stroke="#fff" stroke-width="2.6" stroke-linejoin="round" paint-order="stroke" >高山</text>
<circle cx="460" cy="612" r="3.2" fill="#fff" stroke="#3a3a3a" stroke-width="1.2"/><circle cx="460" cy="612" r="1.4" fill="#3a3a3a"/>
<text x="460.0" y="604.0" font-size="17" fill="#2a2a2a" text-anchor="middle" letter-spacing="0" font-weight="normal" stroke="#fff" stroke-width="2.6" stroke-linejoin="round" paint-order="stroke" >東京</text>
<text x="258.1" y="258.0" font-size="13.5" fill="#4c4a50" text-anchor="middle" letter-spacing="1.6" font-weight="normal" stroke="#fff" stroke-width="2.6" stroke-linejoin="round" paint-order="stroke" >新潟県</text>
<text x="145.6" y="506.7" font-size="13.5" fill="#4c4a50" text-anchor="middle" letter-spacing="1.6" font-weight="normal" stroke="#fff" stroke-width="2.6" stroke-linejoin="round" paint-order="stroke" >長野県</text>
<text x="247.0" y="647.8" font-size="13.5" fill="#4c4a50" text-anchor="middle" letter-spacing="1.6" font-weight="normal" stroke="#fff" stroke-width="2.6" stroke-linejoin="round" paint-order="stroke" >山梨県</text>
<text x="311.0" y="393.8" font-size="13.5" fill="#4c4a50" text-anchor="middle" letter-spacing="1.6" font-weight="normal" stroke="#fff" stroke-width="2.6" stroke-linejoin="round" paint-order="stroke" >群馬県</text>
<text x="347.7" y="533.2" font-size="13.5" fill="#4c4a50" text-anchor="middle" letter-spacing="1.6" font-weight="normal" stroke="#fff" stroke-width="2.6" stroke-linejoin="round" paint-order="stroke" >埼玉県</text>
<text x="358.5" y="600.8" font-size="13.5" fill="#4c4a50" text-anchor="middle" letter-spacing="1.6" font-weight="normal" stroke="#fff" stroke-width="2.6" stroke-linejoin="round" paint-order="stroke" >東京都</text>
<text x="589.4" y="388.2" font-size="13.5" fill="#4c4a50" text-anchor="middle" letter-spacing="1.6" font-weight="normal" stroke="#fff" stroke-width="2.6" stroke-linejoin="round" paint-order="stroke" >茨城県</text>
<text x="480.5" y="334.3" font-size="13.5" fill="#4c4a50" text-anchor="middle" letter-spacing="1.6" font-weight="normal" stroke="#fff" stroke-width="2.6" stroke-linejoin="round" paint-order="stroke" >栃木県</text>
<text x="467.7" y="228.8" font-size="13.5" fill="#4c4a50" text-anchor="middle" letter-spacing="1.6" font-weight="normal" stroke="#fff" stroke-width="2.6" stroke-linejoin="round" paint-order="stroke" >福島県</text>
<text x="441.8" y="116.5" font-size="13" fill="#2f7a52" text-anchor="middle" letter-spacing="0.3" font-weight="normal" stroke="#fff" stroke-width="2.6" stroke-linejoin="round" paint-order="stroke" >磐梯朝日</text>
<text x="441.8" y="130.5" font-size="13" fill="#2f7a52" text-anchor="middle" letter-spacing="0.3" font-weight="normal" stroke="#fff" stroke-width="2.6" stroke-linejoin="round" paint-order="stroke" >国立公園</text>
<text x="233.8" y="391.4" font-size="13" fill="#2f7a52" text-anchor="middle" letter-spacing="0.3" font-weight="normal" stroke="#fff" stroke-width="2.6" stroke-linejoin="round" paint-order="stroke" >上信越高原</text>
<text x="233.4" y="405.1" font-size="13" fill="#2f7a52" text-anchor="middle" letter-spacing="0.3" font-weight="normal" stroke="#fff" stroke-width="2.6" stroke-linejoin="round" paint-order="stroke" >国立公園</text>
<text x="70.1" y="438.5" font-size="13" fill="#2f7a52" text-anchor="middle" letter-spacing="0.3" font-weight="normal" stroke="#fff" stroke-width="2.6" stroke-linejoin="round" paint-order="stroke" >中部山岳</text>
<text x="70.1" y="452.5" font-size="13" fill="#2f7a52" text-anchor="middle" letter-spacing="0.3" font-weight="normal" stroke="#fff" stroke-width="2.6" stroke-linejoin="round" paint-order="stroke" >国立公園</text>
<text x="280.5" y="563.0" font-size="13" fill="#2f7a52" text-anchor="middle" letter-spacing="0.3" font-weight="normal" stroke="#fff" stroke-width="2.6" stroke-linejoin="round" paint-order="stroke" >秩父多摩甲斐</text>
<text x="279.9" y="575.9" font-size="13" fill="#2f7a52" text-anchor="middle" letter-spacing="0.3" font-weight="normal" stroke="#fff" stroke-width="2.6" stroke-linejoin="round" paint-order="stroke" >国立公園</text>
<text x="448.0" y="506.0" font-size="12.5" fill="#16222e" text-anchor="middle" letter-spacing="0" font-weight="normal" stroke="#fff" stroke-width="1.6" stroke-linejoin="round" paint-order="stroke" transform="rotate(40 448 506)">利根川</text>
<path d="M261 453h15v8q0 5-7.500 6.500q-7.500-1.500-7.500-6.500z" fill="#2050e0"/><text x="268.5" y="463.500" font-size="8.500" font-weight="bold" fill="#fff" text-anchor="middle">18</text>
<rect x="560" y="464.500" width="21" height="11" rx="1" fill="#3a9a50"/><text x="570.500" y="473.300" font-size="8" font-weight="bold" fill="#fff" text-anchor="middle">E50</text>
<g opacity="0.5">
<rect x="0" y="100" width="720" height="560" fill="#ffb8b8"/>
<polygon points="454.3,126.1 462.5,126.8 473.5,124.8 481.8,126.1 490.0,124.1 495.5,130.3 501.0,139.2 510.7,135.8 523.0,144.0 531.3,141.3 540.0,141.3 547.5,143.1 556.0,135.0 566.0,128.0 575.0,120.0 582.0,112.0 588.0,104.7 592.3,107.5 626.8,107.5 629.0,128.0 637.6,134.5 646.3,132.3 657.0,128.0 659.2,110.8 672.0,105.0 712.0,104.0 712.0,660.0 470.0,660.0 470.0,600.0 440.0,540.0 370.0,450.0 370.0,345.0 345.0,320.0 345.0,200.0 400.0,190.0 440.0,126.0" fill="#ff8080"/>
<polygon points="96.0,366.2 94.9,369.4 93.8,380.0 94.9,390.8 86.3,408.0 82.0,414.5 85.2,423.1 73.3,436.1 64.7,453.3 73.3,462.0 75.5,474.9 64.7,487.9 60.4,500.8 58.2,513.7 68.8,522.9 64.5,535.8 53.7,548.7 43.0,561.6 25.8,563.7 15.0,578.8 27.9,589.5 43.0,600.3 53.7,621.8 51.6,630.4 62.3,634.7 70.9,647.6 73.1,658.0 165.5,658.0 165.5,641.1 176.3,632.5 180.6,621.8 172.0,604.6 180.6,591.7 172.0,585.2 182.7,565.9 191.3,572.3 206.4,547.6 219.3,553.0 221.4,561.6 236.5,559.4 243.0,560.0 250.0,553.0 262.0,552.0 273.0,553.0 290.0,540.0 290.0,440.0 300.0,370.0 280.0,320.0 200.0,290.0 120.0,310.0 100.0,330.0" fill="#ff8080"/>
<polygon points="343.9,614.3 342.9,630.4 343.9,643.3 345.0,658.0 470.0,660.0 470.0,600.0 350.0,600.0" fill="#ff8080"/>
<polygon points="435.0,104.0 440.5,115.1 448.8,119.3 454.3,126.1 448.8,132.3 440.5,138.5 435.0,152.3 426.8,160.5 419.9,166.0 421.3,177.0 426.8,188.0 426.8,194.9 407.5,196.3 396.5,198.3 394.0,207.9 362.8,212.2 357.4,220.8 362.8,233.7 360.0,243.0 351.0,259.0 359.4,268.0 364.8,278.8 363.7,291.8 367.0,302.6 363.7,313.3 364.8,324.1 362.7,328.4 340.0,345.0 290.0,375.0 264.5,373.7 264.5,360.8 263.4,345.7 253.7,337.1 246.2,326.3 243.0,311.2 235.1,307.9 224.3,310.1 209.2,315.5 202.8,328.4 192.0,334.9 189.8,347.8 185.5,343.5 172.6,345.7 159.6,350.0 148.8,358.6 140.2,352.2 142.4,338.1 129.4,333.8 114.3,334.9 115.4,341.4 107.9,354.3 96.0,366.2 92.8,356.5 88.4,341.4 86.3,326.3 73.3,319.8 60.0,310.0 0.0,300.0 0.0,100.0" fill="#ff4444"/>
<polygon points="552.8,329.5 563.5,337.1 570.0,339.2 572.2,350.0 587.3,360.8 598.1,350.0 606.7,341.4 607.8,327.4 613.2,334.9 626.1,338.1 646.6,345.7 712.0,345.0 712.0,612.0 662.0,606.0 661.0,601.0 653.5,596.0 638.4,580.9 625.5,573.4 614.8,570.2 597.6,550.8 591.1,553.0 589.0,559.4 571.8,562.7 561.0,570.2 546.0,571.3 530.9,574.5 522.3,568.0 509.5,567.0 503.0,559.4 492.2,550.8 481.5,542.2 470.7,527.2 464.3,518.6 458.0,510.0 445.7,494.3 458.6,492.2 464.3,487.9 472.9,474.9 481.6,472.8 485.9,466.3 497.7,455.5 513.9,451.2 524.7,449.0 536.6,446.9 542.0,431.8 549.5,421.0 547.4,399.4 543.0,386.5 545.2,382.4 554.9,378.0 550.6,363.0 548.4,343.5 552.8,329.5" fill="#ff4444"/>
<polygon points="311.7,570.2 316.0,583.1 324.6,598.1 333.2,606.7 343.9,614.3 354.7,619.6 367.6,626.1 380.5,629.3 393.4,633.6 402.0,639.0 408.4,630.4 404.1,626.1 417.0,620.7 436.4,626.1 449.3,633.6 460.0,640.0 466.5,643.3 475.0,640.0 480.4,617.5 482.6,604.6 481.5,587.4 470.0,570.0 340.0,555.0 318.0,562.0" fill="#ff4444"/>
<polygon points="264.5,373.7 271.0,369.4 288.2,367.3 290.4,356.5 306.6,352.2 305.5,339.2 316.3,334.9 315.2,318.7 324.9,315.5 335.7,311.2 338.9,301.5 347.6,309.0 355.1,322.0 362.7,328.4 376.7,329.5 391.8,333.8 385.3,345.7 393.9,352.2 385.3,367.3 385.3,380.2 381.0,391.0 379.9,392.9 389.6,401.6 406.9,405.9 406.9,412.4 400.4,416.7 398.2,433.9 387.5,446.9 387.5,453.3 396.1,462.0 398.2,470.6 409.0,478.1 424.1,479.2 432.8,481.4 437.1,487.9 445.7,494.3 428.4,495.4 409.0,496.5 396.1,490.0 385.3,483.5 370.2,485.7 359.4,480.3 344.3,477.1 337.9,487.9 331.4,500.8 324.9,511.6 312.0,518.1 294.7,526.7 279.4,531.5 268.7,542.2 257.9,533.6 255.9,526.7 253.7,511.6 244.0,503.0 251.6,496.5 249.4,481.4 258.0,466.3 257.0,449.0 247.3,444.7 228.6,449.0 215.7,442.6 210.3,431.8 213.5,412.4 217.9,401.6 230.0,389.0 237.3,384.0 255.9,378.0 264.5,373.7" fill="#ff0000"/>
<polygon points="268.7,542.2 279.4,531.5 294.7,526.7 312.0,518.1 324.9,511.6 331.4,500.8 337.9,487.9 344.3,477.1 359.4,480.3 370.2,485.7 385.3,483.5 396.1,490.0 409.0,496.5 428.4,495.4 445.7,494.3 454.3,516.0 460.0,520.0 468.6,538.0 477.2,557.3 482.6,572.3 481.5,587.4 468.6,586.3 457.9,584.2 445.0,584.2 434.2,588.5 421.3,592.8 419.2,585.2 395.5,592.8 389.1,589.5 378.3,580.9 367.6,574.5 350.4,573.4 333.2,568.0 322.4,563.7 311.7,570.2 294.5,563.7 279.4,561.6 273.0,553.0 268.7,542.2" fill="#c00000"/>
</g>
<g fill="none" stroke="#4f9a9a" stroke-opacity="0.75" stroke-width="1.6" stroke-linejoin="round">
<polyline points="454.3,126.1 462.5,126.8 473.5,124.8 481.8,126.1 490.0,124.1 495.5,130.3 501.0,139.2 510.7,135.8 523.0,144.0 531.3,141.3 540.0,141.3 547.5,143.1 556.0,135.0 566.0,128.0 575.0,120.0 582.0,112.0 588.0,104.7"/>
<polyline points="588.0,104.7 592.3,107.5 626.8,107.5 629.0,128.0 637.6,134.5 646.3,132.3 657.0,128.0 659.2,110.8 672.0,105.0"/>
<polyline points="435.0,104.0 440.5,115.1 448.8,119.3 454.3,126.1"/>
<polyline points="454.3,126.1 448.8,132.3 440.5,138.5 435.0,152.3 426.8,160.5 419.9,166.0 421.3,177.0 426.8,188.0 426.8,194.9 407.5,196.3 396.5,198.3 394.0,207.9 362.8,212.2 357.4,220.8 362.8,233.7 360.0,243.0 351.0,259.0 359.4,268.0 364.8,278.8 363.7,291.8 367.0,302.6 363.7,313.3 364.8,324.1 362.7,328.4"/>
<polyline points="362.7,328.4 355.1,322.0 347.6,309.0 338.9,301.5 335.7,311.2 324.9,315.5 315.2,318.7 316.3,334.9 305.5,339.2 306.6,352.2 290.4,356.5 288.2,367.3 271.0,369.4 264.5,373.7"/>
<polyline points="362.7,328.4 376.7,329.5 391.8,333.8"/>
<polyline points="391.8,333.8 385.3,345.7 393.9,352.2 385.3,367.3 385.3,380.2 381.0,391.0 379.9,392.9 389.6,401.6 406.9,405.9 406.9,412.4 400.4,416.7 398.2,433.9 387.5,446.9 387.5,453.3 396.1,462.0 398.2,470.6 409.0,478.1 424.1,479.2 432.8,481.4 437.1,487.9 445.7,494.3"/>
<polyline points="445.7,494.3 428.4,495.4 409.0,496.5 396.1,490.0 385.3,483.5 370.2,485.7 359.4,480.3 344.3,477.1 337.9,487.9 331.4,500.8 324.9,511.6 312.0,518.1 294.7,526.7 279.4,531.5 268.7,542.2"/>
<polyline points="268.7,542.2 257.9,533.6 255.9,526.7 253.7,511.6 244.0,503.0 251.6,496.5 249.4,481.4 258.0,466.3 257.0,449.0 247.3,444.7 228.6,449.0 215.7,442.6 210.3,431.8 213.5,412.4 217.9,401.6 230.0,389.0 237.3,384.0 255.9,378.0 264.5,373.7"/>
<polyline points="391.8,333.8 402.6,320.9 417.7,315.5 434.9,304.7 450.0,297.2 460.0,292.8 468.6,291.8 470.8,283.1 492.4,278.4 513.9,283.1 526.9,290.7 537.7,304.7 547.4,309.0 548.4,326.3 552.8,329.5"/>
<polyline points="552.8,329.5 563.5,337.1 570.0,339.2 572.2,350.0 587.3,360.8 598.1,350.0 606.7,341.4 607.8,327.4 613.2,334.9 626.1,338.1 646.6,345.7"/>
<polyline points="552.8,329.5 548.4,343.5 550.6,363.0 554.9,378.0 545.2,382.4 543.0,386.5 547.4,399.4 549.5,421.0 542.0,431.8 536.6,446.9 524.7,449.0 513.9,451.2 497.7,455.5 485.9,466.3 481.6,472.8 472.9,474.9 464.3,487.9 458.6,492.2 445.7,494.3"/>
<polyline points="661.0,601.0 653.5,596.0 638.4,580.9 625.5,573.4 614.8,570.2 597.6,550.8 591.1,553.0 589.0,559.4 571.8,562.7 561.0,570.2 546.0,571.3 530.9,574.5 522.3,568.0 509.5,567.0 503.0,559.4 492.2,550.8 481.5,542.2 470.7,527.2 464.3,518.6"/>
<polyline points="445.7,494.3 454.3,516.0 460.0,520.0 468.6,538.0 477.2,557.3 482.6,572.3 481.5,587.4"/>
<polyline points="481.5,587.4 468.6,586.3 457.9,584.2 445.0,584.2 434.2,588.5 421.3,592.8 419.2,585.2 395.5,592.8 389.1,589.5 378.3,580.9 367.6,574.5 350.4,573.4 333.2,568.0 322.4,563.7 311.7,570.2"/>
<polyline points="311.7,570.2 294.5,563.7 279.4,561.6 273.0,553.0 268.7,542.2"/>
<polyline points="311.7,570.2 316.0,583.1 324.6,598.1 333.2,606.7 343.9,614.3"/>
<polyline points="343.9,614.3 354.7,619.6 367.6,626.1 380.5,629.3 393.4,633.6 402.0,639.0 408.4,630.4 404.1,626.1 417.0,620.7 436.4,626.1 449.3,633.6 460.0,640.0 466.5,643.3"/>
<polyline points="481.5,587.4 482.6,604.6 480.4,617.5"/>
<polyline points="343.9,614.3 342.9,630.4 343.9,643.3 345.0,658.0"/>
<polyline points="264.5,373.7 264.5,360.8 263.4,345.7 253.7,337.1 246.2,326.3 243.0,311.2 235.1,307.9 224.3,310.1 209.2,315.5 202.8,328.4 192.0,334.9 189.8,347.8 185.5,343.5 172.6,345.7 159.6,350.0 148.8,358.6 140.2,352.2 142.4,338.1 129.4,333.8 114.3,334.9 115.4,341.4 107.9,354.3 96.0,366.2"/>
<polyline points="96.0,366.2 92.8,356.5 88.4,341.4 86.3,326.3 73.3,319.8"/>
<polyline points="96.0,366.2 94.9,369.4 93.8,380.0 94.9,390.8 86.3,408.0 82.0,414.5 85.2,423.1 73.3,436.1 64.7,453.3 73.3,462.0 75.5,474.9 64.7,487.9 60.4,500.8 58.2,513.7 68.8,522.9 64.5,535.8 53.7,548.7 43.0,561.6 25.8,563.7 15.0,578.8 27.9,589.5 43.0,600.3 53.7,621.8 51.6,630.4 62.3,634.7 70.9,647.6 73.1,658.0"/>
<polyline points="6.0,435.0 15.1,441.5 28.0,437.2 41.0,444.7 53.9,446.9 64.7,453.3"/>
<polyline points="165.5,658.0 165.5,641.1 176.3,632.5 180.6,621.8 172.0,604.6 180.6,591.7 172.0,585.2 182.7,565.9 191.3,572.3 206.4,547.6 219.3,553.0 221.4,561.6 236.5,559.4 243.0,560.0 250.0,553.0 262.0,552.0 273.0,553.0"/>
<polyline points="178.4,621.8 183.0,640.0 187.0,658.0"/>
</g>
<g fill="none" stroke="#7a3030" stroke-opacity="0.55" stroke-width="1" stroke-dasharray="2.5 2.5" stroke-linejoin="round">
<polyline points="454.3,126.1 462.5,126.8 473.5,124.8 481.8,126.1 490.0,124.1 495.5,130.3 501.0,139.2 510.7,135.8 523.0,144.0 531.3,141.3 540.0,141.3 547.5,143.1 556.0,135.0 566.0,128.0 575.0,120.0 582.0,112.0 588.0,104.7"/>
<polyline points="588.0,104.7 592.3,107.5 626.8,107.5 629.0,128.0 637.6,134.5 646.3,132.3 657.0,128.0 659.2,110.8 672.0,105.0"/>
<polyline points="435.0,104.0 440.5,115.1 448.8,119.3 454.3,126.1"/>
<polyline points="454.3,126.1 448.8,132.3 440.5,138.5 435.0,152.3 426.8,160.5 419.9,166.0 421.3,177.0 426.8,188.0 426.8,194.9 407.5,196.3 396.5,198.3 394.0,207.9 362.8,212.2 357.4,220.8 362.8,233.7 360.0,243.0 351.0,259.0 359.4,268.0 364.8,278.8 363.7,291.8 367.0,302.6 363.7,313.3 364.8,324.1 362.7,328.4"/>
<polyline points="362.7,328.4 355.1,322.0 347.6,309.0 338.9,301.5 335.7,311.2 324.9,315.5 315.2,318.7 316.3,334.9 305.5,339.2 306.6,352.2 290.4,356.5 288.2,367.3 271.0,369.4 264.5,373.7"/>
<polyline points="362.7,328.4 376.7,329.5 391.8,333.8"/>
<polyline points="391.8,333.8 385.3,345.7 393.9,352.2 385.3,367.3 385.3,380.2 381.0,391.0 379.9,392.9 389.6,401.6 406.9,405.9 406.9,412.4 400.4,416.7 398.2,433.9 387.5,446.9 387.5,453.3 396.1,462.0 398.2,470.6 409.0,478.1 424.1,479.2 432.8,481.4 437.1,487.9 445.7,494.3"/>
<polyline points="445.7,494.3 428.4,495.4 409.0,496.5 396.1,490.0 385.3,483.5 370.2,485.7 359.4,480.3 344.3,477.1 337.9,487.9 331.4,500.8 324.9,511.6 312.0,518.1 294.7,526.7 279.4,531.5 268.7,542.2"/>
<polyline points="268.7,542.2 257.9,533.6 255.9,526.7 253.7,511.6 244.0,503.0 251.6,496.5 249.4,481.4 258.0,466.3 257.0,449.0 247.3,444.7 228.6,449.0 215.7,442.6 210.3,431.8 213.5,412.4 217.9,401.6 230.0,389.0 237.3,384.0 255.9,378.0 264.5,373.7"/>
<polyline points="391.8,333.8 402.6,320.9 417.7,315.5 434.9,304.7 450.0,297.2 460.0,292.8 468.6,291.8 470.8,283.1 492.4,278.4 513.9,283.1 526.9,290.7 537.7,304.7 547.4,309.0 548.4,326.3 552.8,329.5"/>
<polyline points="552.8,329.5 563.5,337.1 570.0,339.2 572.2,350.0 587.3,360.8 598.1,350.0 606.7,341.4 607.8,327.4 613.2,334.9 626.1,338.1 646.6,345.7"/>
<polyline points="552.8,329.5 548.4,343.5 550.6,363.0 554.9,378.0 545.2,382.4 543.0,386.5 547.4,399.4 549.5,421.0 542.0,431.8 536.6,446.9 524.7,449.0 513.9,451.2 497.7,455.5 485.9,466.3 481.6,472.8 472.9,474.9 464.3,487.9 458.6,492.2 445.7,494.3"/>
<polyline points="661.0,601.0 653.5,596.0 638.4,580.9 625.5,573.4 614.8,570.2 597.6,550.8 591.1,553.0 589.0,559.4 571.8,562.7 561.0,570.2 546.0,571.3 530.9,574.5 522.3,568.0 509.5,567.0 503.0,559.4 492.2,550.8 481.5,542.2 470.7,527.2 464.3,518.6"/>
<polyline points="445.7,494.3 454.3,516.0 460.0,520.0 468.6,538.0 477.2,557.3 482.6,572.3 481.5,587.4"/>
<polyline points="481.5,587.4 468.6,586.3 457.9,584.2 445.0,584.2 434.2,588.5 421.3,592.8 419.2,585.2 395.5,592.8 389.1,589.5 378.3,580.9 367.6,574.5 350.4,573.4 333.2,568.0 322.4,563.7 311.7,570.2"/>
<polyline points="311.7,570.2 294.5,563.7 279.4,561.6 273.0,553.0 268.7,542.2"/>
<polyline points="311.7,570.2 316.0,583.1 324.6,598.1 333.2,606.7 343.9,614.3"/>
<polyline points="343.9,614.3 354.7,619.6 367.6,626.1 380.5,629.3 393.4,633.6 402.0,639.0 408.4,630.4 404.1,626.1 417.0,620.7 436.4,626.1 449.3,633.6 460.0,640.0 466.5,643.3"/>
<polyline points="481.5,587.4 482.6,604.6 480.4,617.5"/>
<polyline points="343.9,614.3 342.9,630.4 343.9,643.3 345.0,658.0"/>
<polyline points="264.5,373.7 264.5,360.8 263.4,345.7 253.7,337.1 246.2,326.3 243.0,311.2 235.1,307.9 224.3,310.1 209.2,315.5 202.8,328.4 192.0,334.9 189.8,347.8 185.5,343.5 172.6,345.7 159.6,350.0 148.8,358.6 140.2,352.2 142.4,338.1 129.4,333.8 114.3,334.9 115.4,341.4 107.9,354.3 96.0,366.2"/>
<polyline points="96.0,366.2 92.8,356.5 88.4,341.4 86.3,326.3 73.3,319.8"/>
<polyline points="96.0,366.2 94.9,369.4 93.8,380.0 94.9,390.8 86.3,408.0 82.0,414.5 85.2,423.1 73.3,436.1 64.7,453.3 73.3,462.0 75.5,474.9 64.7,487.9 60.4,500.8 58.2,513.7 68.8,522.9 64.5,535.8 53.7,548.7 43.0,561.6 25.8,563.7 15.0,578.8 27.9,589.5 43.0,600.3 53.7,621.8 51.6,630.4 62.3,634.7 70.9,647.6 73.1,658.0"/>
<polyline points="6.0,435.0 15.1,441.5 28.0,437.2 41.0,444.7 53.9,446.9 64.7,453.3"/>
<polyline points="165.5,658.0 165.5,641.1 176.3,632.5 180.6,621.8 172.0,604.6 180.6,591.7 172.0,585.2 182.7,565.9 191.3,572.3 206.4,547.6 219.3,553.0 221.4,561.6 236.5,559.4 243.0,560.0 250.0,553.0 262.0,552.0 273.0,553.0"/>
<polyline points="178.4,621.8 183.0,640.0 187.0,658.0"/>
</g>
<polygon points="323.0,104.0 309.0,115.0 292.0,128.0 284.0,141.0 280.0,160.0 272.0,175.5 261.0,193.0 251.0,206.0 246.0,220.0 240.0,229.0 225.0,238.0 216.0,243.0 203.0,255.0 190.0,268.0 173.0,274.5 157.5,274.5 149.0,283.0 129.0,294.0 112.0,305.0 93.0,313.0 73.0,320.0 60.0,322.0 43.0,328.0 32.0,337.0 28.0,352.0 19.0,363.0 6.0,371.0 0.0,371.0 0.0,100.0 323.0,100.0" fill="#86d5ea"/>
<polygon points="672.0,104.0 676.0,113.0 682.0,135.0 687.0,150.0 689.4,162.5 690.5,186.0 691.5,208.0 689.4,229.0 690.0,240.0 688.6,261.6 682.0,283.0 684.0,302.6 678.0,320.0 660.6,330.6 647.7,341.4 647.7,352.0 641.0,365.0 634.7,381.0 626.0,401.6 619.6,418.8 615.3,434.0 620.7,441.5 615.3,451.0 611.0,466.0 606.7,481.4 607.8,500.8 610.5,514.0 617.0,527.0 627.7,544.4 632.0,553.0 638.4,572.3 647.0,583.0 657.8,596.0 661.0,604.6 653.5,605.7 634.0,610.0 619.0,619.6 606.0,632.5 597.6,643.3 589.0,658.0 715.0,660.0 715.0,100.0 672.0,100.0" fill="#86d5ea"/>
<polygon points="473.1,621.0 478.5,621.0 483.4,624.6 489.5,617.3 493.7,616.1 490.7,642.8 490.7,658.0 468.0,658.0 470.0,639.0 465.2,631.9 471.9,628.3" fill="#86d5ea"/>
<polygon points="493.7,616.1 500.4,614.9 509.0,621.0 517.4,628.3 519.8,634.0 521.0,658.0 490.7,658.0 490.7,642.8" fill="#cfa3ab"/>
<polygon points="190.0,104.0 187.6,121.6 192.4,129.0 201.0,123.7 212.0,116.0 225.0,106.5 229.0,104.0" fill="#d9917f"/>
<polygon points="6,195 16,193 21,200 19,210 6,213" fill="#d8ecd0"/>
<circle cx="239.8" cy="229.0" r="2.6" fill="#fff" stroke="#5a4040" stroke-width="1.1"/>
<text x="239.4" y="223.3" font-size="12" fill="#5a4040" text-anchor="middle" letter-spacing="0" font-weight="normal" stroke="#fff" stroke-width="2.6" stroke-linejoin="round" paint-order="stroke" >柏崎</text>
<circle cx="180.8" cy="279.9" r="2.6" fill="#fff" stroke="#5a4040" stroke-width="1.1"/>
<text x="181.2" y="274.1" font-size="12" fill="#5a4040" text-anchor="middle" letter-spacing="0" font-weight="normal" stroke="#fff" stroke-width="2.6" stroke-linejoin="round" paint-order="stroke" >上越</text>
<circle cx="112.6" cy="304.7" r="2.6" fill="#fff" stroke="#5a4040" stroke-width="1.1"/>
<text x="112.6" y="298.9" font-size="12" fill="#5a4040" text-anchor="middle" letter-spacing="0" font-weight="normal" stroke="#fff" stroke-width="2.6" stroke-linejoin="round" paint-order="stroke" >糸魚川</text>
<circle cx="623.0" cy="564.8" r="2.6" fill="#fff" stroke="#5a4040" stroke-width="1.1"/>
<text x="623.0" y="559.0" font-size="12" fill="#5a4040" text-anchor="middle" letter-spacing="0" font-weight="normal" stroke="#fff" stroke-width="2.6" stroke-linejoin="round" paint-order="stroke" >神栖</text>
<circle cx="652.8" cy="599.9" r="2.6" fill="#fff" stroke="#5a4040" stroke-width="1.1"/>
<text x="652.4" y="593.8" font-size="12" fill="#5a4040" text-anchor="middle" letter-spacing="0" font-weight="normal" stroke="#fff" stroke-width="2.6" stroke-linejoin="round" paint-order="stroke" >銚子</text>
<text x="15.0" y="209.0" font-size="12" fill="#5a4040" text-anchor="end" letter-spacing="0" font-weight="normal" stroke="#fff" stroke-width="2.6" stroke-linejoin="round" paint-order="stroke" >洲</text>
<path d="M357.3 380.500 C353 372 343.800 366.500 343.800 357.500 A13.500 13.500 0 1 1 370.800 357.500 C370.800 366.500 361.600 372 357.300 380.500z" fill="#17a2b8"/><circle cx="357.3" cy="357.300" r="6.200" fill="#fff"/>
<g><rect x="547" y="111" width="70" height="43" rx="2" fill="#fff" style="filter:drop-shadow(0 1px 2px rgba(0,0,0,.3))"/><text x="561.5" y="138.500" font-size="18" fill="#000">地図</text><path d="M601.500 130.800h8l-4 4.600z" fill="#666"/></g>
<g><rect x="679" y="111" width="24" height="49" rx="2" fill="#fff" style="filter:drop-shadow(0 1px 2px rgba(0,0,0,.3))"/><rect x="682" y="135" width="18" height="1" fill="#e6e6e6"/><path d="M684.300 121.200h13.400v3h-13.400zM689.500 116h3v13.400h-3z" fill="#666"/><path d="M684.300 146.200h13.400v3h-13.400z" fill="#666"/></g>
<g><rect x="679" y="172" width="24" height="24" rx="2" fill="#fff" style="filter:drop-shadow(0 1px 2px rgba(0,0,0,.3))"/><circle cx="691" cy="177.800" r="3.300" fill="#f5b50a"/><path d="M686.200 182.200q4.800-1.800 9.600 0l1 7.500h-1.600l-.6 5.300h-2.600l-.5-4.200h-1l-.5 4.200h-2.600l-.6-5.300h-1.600z" fill="#fbbc04"/><path d="M688.600 182l2.400 3.400 2.400-3.400z" fill="#e8830a"/></g>
<text x="17" y="651" font-size="19" font-weight="normal" stroke="#fff" stroke-width="2" paint-order="stroke" stroke-linejoin="round" letter-spacing="-0.6"><tspan fill="#4285f4">G</tspan><tspan fill="#ea4335">o</tspan><tspan fill="#fbbc05">o</tspan><tspan fill="#4285f4">g</tspan><tspan fill="#34a853">l</tspan><tspan fill="#ea4335">e</tspan></text>
<g font-size="10" fill="#222"><rect x="284" y="643.500" width="421" height="14" fill="#f5f5f5" fill-opacity="0.75"/><text x="288" y="654">キーボード ショートカット</text><rect x="415.500" y="643.500" width="1" height="14" fill="#ccc"/><text x="421" y="654">地図データ ©2025 Google</text><rect x="545" y="643.500" width="1" height="14" fill="#ccc"/><text x="551" y="654">利用規約</text><rect x="597.500" y="643.500" width="1" height="14" fill="#ccc"/><text x="603" y="654">地図の誤りを報告する</text></g>
</svg>
</div>

<div id="legend" class="abs">
 <i style="top:8.700px;background:#c00000"></i><div style="top:6.200px">上位～累計値3割まで</div>
 <i style="top:25.500px;background:#ff0000"></i><div style="top:23px">累計値3割～5割</div>
 <i style="top:42.200px;background:#ff4444"></i><div style="top:39.700px">累計値5割～7割</div>
 <i style="top:60px;background:#ff8080"></i><div style="top:57.500px">累計値7割～9割</div>
 <i style="top:77.800px;background:#ffb8b8"></i><div style="top:75.300px">累計値9割～（その他除く）</div>
</div>

<div id="total" class="abs">推計来訪者数: <span style="font-size:15.600px">16,605</span> &nbsp; 人</div>

<div id="tabs" class="abs">
 <span style="left:0;width:45px;border-right:1px solid #6c757d">町丁目</span>
 <span style="left:45px;width:56px;border-right:1px solid #6c757d">市区町村</span>
 <span style="left:101px;width:57px;background:#6c757d;color:#fff">都道府県</span>
</div>
<div id="dl" class="abs"><svg width="22" height="20" viewBox="0 0 22 20" style="display:block"><path d="M11 5.500v8.500M7.500 10.800L11 14.300L14.500 10.800" fill="none" stroke="#6c757d" stroke-width="1.200"/></svg></div>

<div id="tblwrap" class="abs">
<table>
<colgroup><col style="width:22px"><col style="width:144px"><col style="width:49px"><col style="width:73px"><col style="width:60px"><col style="width:60px"></colgroup>
<tr><th style="padding:0"><span class="cb"></span></th><th>都道府県名</th><th class="s" style="padding-left:9px">人数<svg class="so" viewBox="0 0 7 11"><path d="M0.500 4.500L3.500 1L6.500 4.500z" fill="#d0d0d0"/><path d="M0.500 6.500L3.500 10L6.500 6.500z" fill="#6a6a6a"/></svg></th><th class="s" style="padding-left:9px">獲得比率<svg class="so" viewBox="0 0 7 11"><path d="M0.500 4.500L3.500 1L6.500 4.500z" fill="#d0d0d0"/><path d="M0.500 6.500L3.500 10L6.500 6.500z" fill="#6a6a6a"/></svg></th><th class="s" style="padding-left:9px">距離<span style="font-weight:normal;color:#999;font-size:10px">※</span><svg class="so" viewBox="0 0 7 11"><path d="M0.500 4.500L3.500 1L6.500 4.500z" fill="#d0d0d0"/><path d="M0.500 6.500L3.500 10L6.500 6.500z" fill="#6a6a6a"/></svg></th><th>累計値</th></tr>
<tr class="o"><td style="padding:0"><span class="cb"></span></td><td>埼玉県</td><td class="r">3364</td><td class="r">0.0%</td><td class="r">77.4</td><td class="r">20.2%</td></tr>
<tr><td style="padding:0"><span class="cb"></span></td><td>群馬県</td><td class="r">3106</td><td class="r">0.0%</td><td class="r">27.8</td><td class="r">38.9%</td></tr>
<tr class="o"><td style="padding:0"><span class="cb"></span></td><td>東京都</td><td class="r">2345</td><td class="r">0.0%</td><td class="r">115.2</td><td class="r">53.0%</td></tr>
<tr><td style="padding:0"><span class="cb"></span></td><td>新潟県</td><td class="r">1291</td><td class="r">0.0%</td><td class="r">89.3</td><td class="r">60.8%</td></tr>
<tr class="o"><td style="padding:0"><span class="cb"></span></td><td>千葉県</td><td class="r">952</td><td class="r">0.0%</td><td class="r">163.9</td><td class="r">66.5%</td></tr>
<tr><td style="padding:0"><span class="cb"></span></td><td>茨城県</td><td class="r">952</td><td class="r">0.0%</td><td class="r">110.5</td><td class="r">72.3%</td></tr>
<tr class="o"><td style="padding:0"><span class="cb"></span></td><td>栃木県</td><td class="r">864</td><td class="r">0.0%</td><td class="r">54.6</td><td class="r">77.5%</td></tr>
<tr><td style="padding:0"><span class="cb"></span></td><td>神奈川県</td><td class="r">848</td><td class="r">0.0%</td><td class="r">138.0</td><td class="r">82.6%</td></tr>
<tr class="o"><td style="padding:0"><span class="cb"></span></td><td>長野県</td><td class="r">480</td><td class="r">0.0%</td><td class="r">122.1</td><td class="r">85.5%</td></tr>
<tr><td style="padding:0"><span class="cb"></span></td><td>大阪府</td><td class="r">355</td><td class="r">0.0%</td><td class="r">398.4</td><td class="r">87.6%</td></tr>
<tr class="o"><td style="padding:0"><span class="cb"></span></td><td>福島県</td><td class="r">334</td><td class="r">0.0%</td><td class="r">130.9</td><td class="r">89.6%</td></tr>
<tr><td style="padding:0"><span class="cb"></span></td><td>愛知県</td><td class="r">283</td><td class="r">0.0%</td><td class="r">254.8</td><td class="r">91.3%</td></tr>
<tr class="o"><td style="padding:0"><span class="cb"></span></td><td>山梨県</td><td class="r">215</td><td class="r">0.0%</td><td class="r">122.3</td><td class="r">92.6%</td></tr>
<tr><td style="padding:0"><span class="cb"></span></td><td>兵庫県</td><td class="r">204</td><td class="r">0.0%</td><td class="r">426.5</td><td class="r">93.9%</td></tr>
<tr class="o"><td style="padding:0"><span class="cb"></span></td><td>富山県</td><td class="r">135</td><td class="r">0.0%</td><td class="r">172.0</td><td class="r">94.7%</td></tr>
<tr><td style="padding:0"><span class="cb"></span></td><td>静岡県</td><td class="r">104</td><td class="r">0.0%</td><td class="r">212.3</td><td class="r">95.3%</td></tr>
<tr class="o"><td style="padding:0"><span class="cb"></span></td><td>秋田県</td><td class="r">93</td><td class="r">0.0%</td><td class="r">361.3</td><td class="r">95.9%</td></tr>
<tr><td style="padding:0"><span class="cb"></span></td><td>岐阜県</td><td class="r">91</td><td class="r">0.0%</td><td class="r">210.4</td><td class="r">96.4%</td></tr>
<tr class="o"><td style="padding:0"><span class="cb"></span></td><td>京都府</td><td class="r">91</td><td class="r">0.0%</td><td class="r">367.7</td><td class="r">96.9%</td></tr>
</table>
</div>
<div id="sb" class="abs"><b></b><svg width="17" height="524" viewBox="0 0 17 524" style="position:absolute;left:0;top:0"><path d="M5 11l3.500-4l3.500 4z" fill="#a3a3a3"/><path d="M5 512.500l3.500 4l3.500-4z" fill="#505050"/></svg></div>

<div class="note" style="top:664px">※都道府県の中心点からの距離</div>
<div class="note" style="top:683.5px">※獲得比率は人口に対するユニークな来訪者数の割合</div>

<div id="foot" class="abs"><div class="abs n" id="fn" style="transform:scaleX(0.905)">※グラフが示す値は、GPS位置情報ビッグデータから独自に集計した推測値です。</div><svg class="abs" style="left:378px;top:15px" width="15" height="15" viewBox="0 0 15 15"><circle cx="7.500" cy="7.500" r="7" fill="#0d6efd"/><path d="M5.300 5.800a2.200 2.200 0 1 1 3.300 1.900c-.8.500-1.100.9-1.100 1.700" fill="none" stroke="#fff" stroke-width="1.500"/><circle cx="7.500" cy="11.600" r="0.950" fill="#fff"/></svg></div>
<div class="btn" style="left:824px;width:190px"><svg style="position:absolute;left:12px;top:6px" width="14" height="17" viewBox="0 0 14 17"><path d="M1.700 0.800h6.800l4 4v11.400h-10.800z" fill="none" stroke="#fff" stroke-width="1.400" stroke-linejoin="round"/><path d="M8.300 0.800v4.200h4.200" fill="none" stroke="#fff" stroke-width="1.200"/><path d="M4.600 8l4.800 6M9.400 8l-4.800 6" stroke="#fff" stroke-width="1.500"/></svg><span class="bt" style="left:32.500px">Excel<span class="kn" style="transform:scaleX(0.897)">レポートダウンロード</span></span></div>
<div class="btn" style="left:1022px;width:138px"><svg style="position:absolute;left:9px;top:7px" width="17" height="14" viewBox="0 0 17 14"><path d="M4.200 13.500a3.700 3.700 0 0 1-.9-7.300a4.600 4.600 0 0 1 8.900-1.500a4.100 4.100 0 0 1 .9 8.800z" fill="#fff"/><path d="M8.500 4.500v5.500M5.800 7.600l2.700 2.900l2.700-2.900" fill="none" stroke="#17a2b8" stroke-width="1.700"/></svg><span class="bt" style="left:32px">CSV<span class="kn" style="transform:scaleX(0.879)">ダウンロード</span></span></div>
</body>
</html>
